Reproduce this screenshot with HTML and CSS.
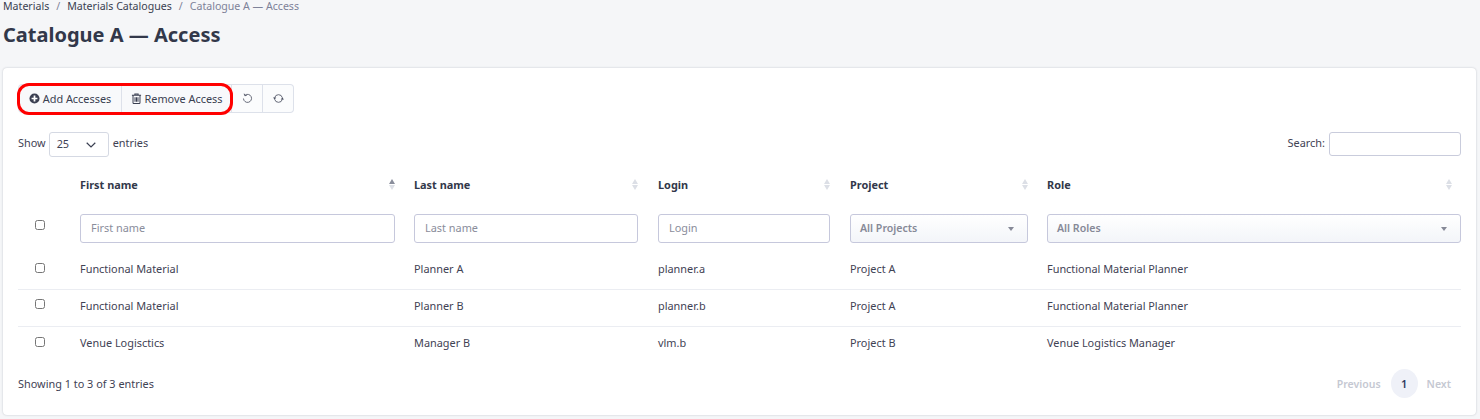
FILE: index.html
```html
<!DOCTYPE html>
<html lang="en">
<head>
    <meta charset="UTF-8">
    <title>Catalogue A — Access</title>
    <link rel="stylesheet" href="styles.css">
</head>
<body>
    <ul class="crumbs">
        <li>Materials</li>
        <li class="sep">/</li>
        <li>Materials Catalogues</li>
        <li class="sep">/</li>
        <li class="crumb-current">Catalogue A — Access</li>
    </ul>
    <h1 class="page-title">Catalogue A — Access</h1>

    <div class="card">
        <div class="toolbar">
            <button class="tool-btn btn-add">
                <svg class="icon" viewBox="0 0 12 12"><circle cx="6" cy="6" r="5.5" fill="#3a3f51"/><path d="M6 2.8v6.4M2.8 6h6.4" stroke="#fff" stroke-width="1.9"/></svg>
                Add Accesses
            </button>
            <button class="tool-btn btn-remove">
                <svg class="icon" viewBox="0 0 12 12" fill="none" stroke="#3a3f51" stroke-width="1.1"><path d="M1 2.5h10M4.2 2.5V1h3.6v1.5M2.2 2.5v8.2q0 .8.8.8h6q.8 0 .8-.8V2.5M4.4 4.5v5M6 4.5v5M7.6 4.5v5"/></svg>
                Remove Access
            </button>
            <button class="tool-btn btn-icon">
                <svg class="icon" viewBox="0 0 12 12" fill="none" stroke="#4a4f60" stroke-width=".9"><path d="M3.4 2.3A4.4 4.4 0 1 1 1.6 6"/><path d="M2.4.8l.6 2.1 2.1-.2" stroke-width="1"/></svg>
            </button>
            <button class="tool-btn btn-icon">
                <svg class="icon" viewBox="0 0 12 12" fill="none" stroke="#4a4f60" stroke-width=".9"><path d="M1.8 5.2A4.3 4.3 0 0 1 10.2 5.2M10.2 6.8A4.3 4.3 0 0 1 1.8 6.8"/><path d="M0 5h3.6L1.8 7.2zM12 7H8.4l1.8-2.2z" fill="#4a4f60" stroke="none"/></svg>
            </button>
            <div class="highlight"></div>
        </div>

        <div class="table-top">
            <label class="length">
                Show
                <span class="length-select">25
                    <svg class="chev" viewBox="0 0 10 6" fill="none" stroke="#3a3f51" stroke-width="1.2"><path d="M.7.8 5 5l4.3-4.2"/></svg>
                </span>
                entries
            </label>
            <label class="search">Search: <input class="search-input" type="text"></label>
        </div>

        <table class="data-table">
            <colgroup>
                <col class="c-check"><col class="c-first"><col class="c-last"><col class="c-login"><col class="c-project"><col class="c-role">
            </colgroup>
            <thead>
                <tr class="head-row">
                    <th></th>
                    <th><div class="th-in">First name <span class="sort"><i class="up on"></i><i class="down"></i></span></div></th>
                    <th><div class="th-in">Last name <span class="sort"><i class="up"></i><i class="down"></i></span></div></th>
                    <th><div class="th-in">Login <span class="sort"><i class="up"></i><i class="down"></i></span></div></th>
                    <th><div class="th-in">Project <span class="sort"><i class="up"></i><i class="down"></i></span></div></th>
                    <th><div class="th-in">Role <span class="sort sort-last"><i class="up"></i><i class="down"></i></span></div></th>
                </tr>
                <tr class="filter-row">
                    <th class="check-cell"><input type="checkbox"></th>
                    <th><input class="filter" type="text" placeholder="First name"></th>
                    <th><input class="filter" type="text" placeholder="Last name"></th>
                    <th><input class="filter" type="text" placeholder="Login"></th>
                    <th><div class="picker">All Projects<i class="caret"></i></div></th>
                    <th><div class="picker">All Roles<i class="caret"></i></div></th>
                </tr>
            </thead>
            <tbody>
                <tr>
                    <td class="check-cell"><input type="checkbox"></td>
                    <td>Functional Material</td><td>Planner A</td><td>planner.a</td><td>Project A</td><td>Functional Material Planner</td>
                </tr>
                <tr>
                    <td class="check-cell"><input type="checkbox"></td>
                    <td>Functional Material</td><td>Planner B</td><td>planner.b</td><td>Project A</td><td>Functional Material Planner</td>
                </tr>
                <tr>
                    <td class="check-cell"><input type="checkbox"></td>
                    <td>Venue Logisctics</td><td>Manager B</td><td>vlm.b</td><td>Project B</td><td>Venue Logistics Manager</td>
                </tr>
            </tbody>
        </table>

        <div class="table-bottom">
            <div class="info">Showing 1 to 3 of 3 entries</div>
            <div class="paging">
                <span class="page-link page-prev">Previous</span>
                <span class="page-num">1</span>
                <span class="page-link">Next</span>
            </div>
        </div>
    </div>
</body>
</html>
```

FILE: styles.css
```css
* {
    box-sizing: border-box;
}

html, body {
    height: 419px;
    overflow: hidden;
}

body {
    margin: 0;
    padding: 0 4px 0 3px;
    background: #f5f6f8;
    color: #3f4254;
    font-family: "Noto Sans", "Open Sans", sans-serif;
    font-size: 10.9px;
}

.crumbs {
    list-style: none;
    display: flex;
    gap: 7px;
    margin: 0;
    padding: 0;
    height: 12px;
    font-size: 10.6px;
    line-height: 12px;
    color: #3a3f51;
}

.crumb-current, .sep {
    color: #7e8299;
}

.page-title {
    margin: 11px 0 0;
    height: 45px;
    font-size: 20px;
    line-height: 24px;
    font-weight: 700;
    color: #32384a;
}

.card {
    height: 347px;
    padding: 16px 15px 0;
    background: #fff;
    border-radius: 4px;
    box-shadow: 0 0 2px rgba(60, 70, 90, 0.3);
}

.toolbar {
    position: relative;
    display: flex;
    width: 276px;
    height: 29px;
}

.tool-btn {
    display: flex;
    align-items: center;
    justify-content: center;
    gap: 3px;
    height: 29px;
    padding: 0;
    background: #f8f9fb;
    border: 1px solid #dde1ea;
    border-left: 0;
    font: inherit;
    color: #3a3f51;
}

.btn-add {
    width: 104px;
    border-left: 1px solid #dde1ea;
    border-radius: 4px 0 0 4px;
}

.btn-remove {
    width: 110px;
}

.btn-icon {
    width: 31px;
    background: #fbfcfd;
}

.btn-icon:last-of-type {
    border-radius: 0 4px 4px 0;
}

.icon {
    width: 11px;
    height: 11px;
}

.highlight {
    position: absolute;
    left: -1px;
    top: -1px;
    width: 216px;
    height: 32px;
    border: 3px solid #f00;
    border-radius: 12px;
}

.table-top {
    display: flex;
    justify-content: space-between;
    margin-top: 19px;
    height: 25px;
    line-height: 22px;
}

.length, .search {
    display: flex;
    align-items: flex-start;
    gap: 3px;
}

.length-select {
    display: flex;
    justify-content: space-between;
    align-items: center;
    width: 60px;
    height: 25px;
    padding: 0 12px 1px 7px;
    border: 1px solid #d5d9e3;
    border-radius: 3px;
    margin-right: 1px;
}

.chev {
    width: 10px;
    height: 6px;
    margin-top: 2px;
}

.search-input {
    width: 132px;
    height: 24px;
    border: 1px solid #c9ccdc;
    border-radius: 3px;
    margin-left: 1px;
}

.data-table {
    width: 1443px;
    margin-top: 10px;
    table-layout: fixed;
    border-collapse: collapse;
}

.c-check { width: 43px; }
.c-first { width: 334px; }
.c-last { width: 243px; }
.c-login { width: 192px; }
.c-project { width: 198px; }
.c-role { width: 433px; }

th, td {
    padding: 0 0 0 19px;
    text-align: left;
}

th:nth-child(4), td:nth-child(4),
th:nth-child(5), td:nth-child(5) {
    padding-left: 20px;
}

.head-row th {
    height: 47px;
    padding-bottom: 13px;
    font-weight: 700;
    color: #32384a;
}

.th-in {
    display: flex;
    justify-content: space-between;
    align-items: center;
}

.sort {
    display: flex;
    flex-direction: column;
    gap: 1px;
}

.sort-last {
    padding-right: 9px;
}

.sort i {
    display: block;
    width: 0;
    height: 0;
    border-left: 3px solid transparent;
    border-right: 3px solid transparent;
}

.sort .up {
    border-bottom: 5px solid #dcdfe6;
}

.sort .down {
    border-top: 5px solid #dcdfe6;
}

.sort .up.on {
    border-bottom-color: #8a8e9c;
}

.filter-row th {
    height: 29px;
    font-weight: 400;
}

th.check-cell, td.check-cell {
    padding: 0;
    text-align: center;
}

.check-cell input {
    width: 10px;
    height: 10px;
    margin: 0 0 7px 1px;
    vertical-align: middle;
}

.filter, .picker {
    width: 100%;
    height: 29px;
    border: 1px solid #c6c8dc;
    border-radius: 3px;
    font: inherit;
}

.filter {
    display: block;
    padding: 0 10px 2px;
    background: #fff;
    color: #3a3f51;
}

.filter::placeholder {
    color: #8a8d9b;
    opacity: 1;
}

.picker {
    display: flex;
    justify-content: space-between;
    align-items: center;
    padding: 0 13px 2px 9px;
    background: linear-gradient(#fff, #f3f5f9);
    color: #868997;
    font-size: 10.6px;
    font-weight: 600;
}

.caret {
    width: 0;
    height: 0;
    margin-top: 2px;
    border-left: 3px solid transparent;
    border-right: 3px solid transparent;
    border-top: 4px solid #868997;
}

tbody tr {
    height: 37px;
    border-top: 1px solid #ebedf2;
}

tbody td {
    padding-bottom: 4px;
}

tbody tr:first-child {
    border-top: 0;
    height: 46px;
    vertical-align: bottom;
}

tbody tr:first-child td {
    padding-bottom: 13px;
}

tbody tr:first-child td.check-cell {
    padding-bottom: 9px;
}

.table-bottom {
    display: flex;
    justify-content: space-between;
    align-items: center;
    margin-top: 6px;
    height: 29px;
}

.paging {
    display: flex;
    align-items: center;
    gap: 9px;
    padding-right: 10px;
}

.page-link {
    color: #c5c8d2;
    font-size: 10.5px;
    font-weight: 600;
}

.page-prev {
    margin-right: 1px;
}

.page-num {
    width: 27px;
    height: 29px;
    border-radius: 50%;
    background: #eff1f8;
    color: #2f3a5f;
    font-weight: 600;
    text-align: center;
    line-height: 29px;
}
```
